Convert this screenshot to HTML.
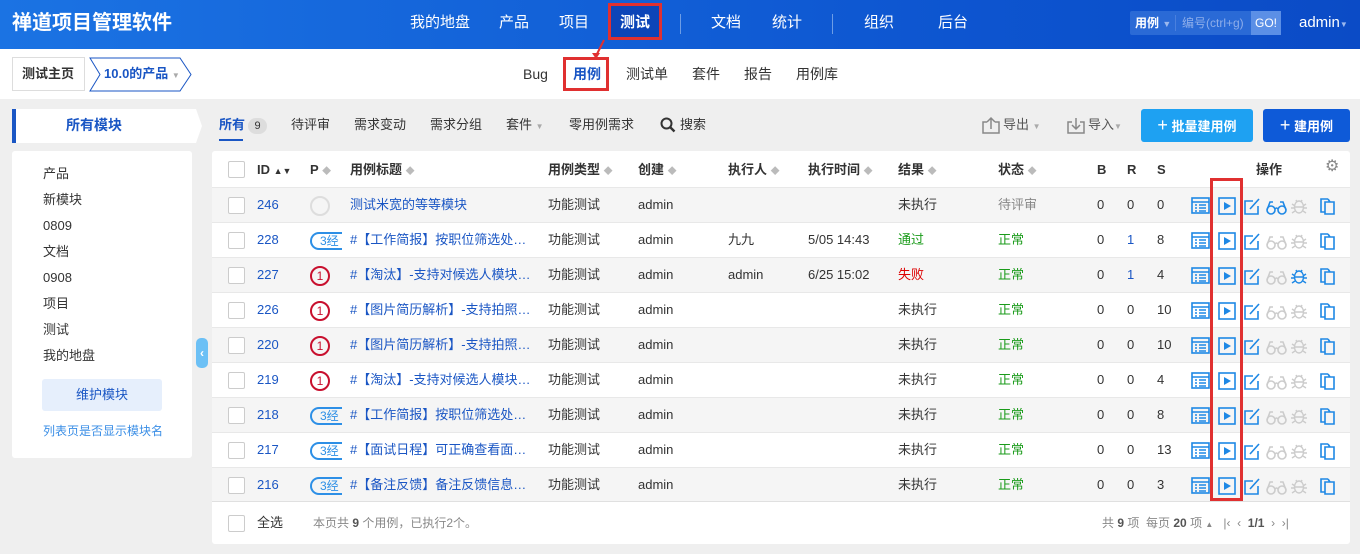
<!DOCTYPE html>
<html><head><meta charset="utf-8"><style>
*{box-sizing:border-box;margin:0;padding:0}
body{width:1360px;height:554px;overflow:hidden;background:#efefef;font-family:"Liberation Sans","Noto Sans CJK SC",sans-serif;font-size:13px;line-height:16px;color:#333;position:relative}
.a{position:absolute;white-space:nowrap}
#hd{position:absolute;left:0;top:0;width:1360px;height:49px;background:linear-gradient(90deg,#1b73e3,#0d55d0 70%,#0b4bc6)}
.w{color:#fff;font-size:15px;line-height:18px;top:14px}
#sub{position:absolute;left:0;top:49px;width:1360px;height:50px;background:#fff}
.s{top:66px;font-size:14px;line-height:17px;color:#333}
.tb{top:117px;font-size:13px;color:#333}
.lp{left:43px;font-size:13px;color:#333}
#tbl{position:absolute;left:212px;top:151px;width:1138px;height:393px;background:#fff;border-radius:3px}
.row{position:absolute;left:212px;width:1138px;height:35px;border-top:1px solid #e8e8e8}
.g{background:#f5f5f5}
.row span{position:absolute;top:9px;white-space:nowrap}
.cb{position:absolute;left:16px;top:9px;width:17px;height:17px;border:1px solid #ccc;border-radius:2px;background:#fff}
.id{left:45px;color:#1a56c4}
.t{left:138px;color:#1a56c4}
.c1{left:336px}.c2{left:426px}.c3{left:516px}.c4{left:596px}.c5{left:686px}.c6{left:786px}
.b{left:885px}.r{left:915px}.sn{left:945px}
.ic{position:absolute;top:8px}
.p1{position:absolute;left:98px;top:8px;width:20px;height:20px;border:2px solid #c8102e;border-radius:50%;color:#c8102e;font-size:12px;text-align:center;line-height:16px}
.p3{position:absolute;left:98px;top:9px;width:32px;height:18px;border:2px solid #2d8fe6;border-right:none;border-radius:9px 0 0 9px;color:#2d8fe6;font-size:12px;line-height:14px;padding-left:8px;overflow:hidden}
.h{position:absolute;top:162px;font-weight:bold;font-size:13px;white-space:nowrap}
</style></head><body>
<div id="hd"></div>
<div class="a" style="left:12px;top:11px;color:#fff;font-size:20px;line-height:24px;font-weight:bold">禅道项目管理软件</div>
<div class="a w" style="left:410px">我的地盘</div>
<div class="a w" style="left:499px">产品</div>
<div class="a w" style="left:559px">项目</div>
<div class="a" style="left:608px;top:3px;width:54px;height:37px;border:3px solid #e03030;background:#0c45b8"></div>
<div class="a w" style="left:620px;font-weight:bold">测试</div>
<div class="a" style="left:680px;top:14px;width:1px;height:20px;background:#6d9de6"></div>
<div class="a w" style="left:711px">文档</div>
<div class="a w" style="left:772px">统计</div>
<div class="a" style="left:832px;top:14px;width:1px;height:20px;background:#6d9de6"></div>
<div class="a w" style="left:864px">组织</div>
<div class="a w" style="left:938px">后台</div>
<div class="a" style="left:1130px;top:11px;width:151px;height:24px;background:#2a6ad6;border-radius:2px"></div>
<div class="a" style="left:1135px;top:15px;color:#fff;font-size:12px;font-weight:bold">用例 <span style="color:#9bb8ee;font-size:9px">▼</span></div>
<div class="a" style="left:1175px;top:15px;width:1px;height:16px;background:#4a80de"></div>
<div class="a" style="left:1182px;top:15px;color:#8eaeea;font-size:12px">编号(ctrl+g)</div>
<div class="a" style="left:1251px;top:11px;width:30px;height:24px;background:#5b8fe6;color:#fff;font-size:12px;line-height:24px;text-align:center">GO!</div>
<div class="a" style="left:1299px;top:14px;color:#fff;font-size:15px;line-height:18px">admin<span style="font-size:8px;color:#9bb8ee">▼</span></div>
<div id="sub"></div>
<div class="a" style="left:12px;top:57px;width:73px;height:34px;border:1px solid #ddd;font-weight:bold;line-height:32px;padding-left:9px;font-size:13px">测试主页</div>
<svg class="a" style="left:88px;top:57px" width="106" height="35"><path d="M2 1H92L103 17.5L92 34H2L12 17.5Z" fill="#fff" stroke="#1a56c4"/></svg>
<div class="a" style="left:104px;top:66px;color:#1a56c4;font-weight:bold;font-size:13px">10.0的产品 <span style="color:#aaa;font-size:8px">▼</span></div>
<div class="a s" style="left:523px">Bug</div>
<div class="a" style="left:563px;top:57px;width:46px;height:34px;border:3px solid #e03030"></div>
<div class="a s" style="left:573px;color:#1a56c4;font-weight:bold">用例</div>
<svg class="a" style="left:590px;top:38px" width="20" height="24"><path d="M14 2L6 18" stroke="#e03030" stroke-width="2"/><path d="M2 15L6 21L10 15Z" fill="#e03030"/></svg>
<div class="a s" style="left:626px">测试单</div>
<div class="a s" style="left:692px">套件</div>
<div class="a s" style="left:744px">报告</div>
<div class="a s" style="left:796px">用例库</div>
<svg class="a" style="left:12px;top:109px" width="190" height="34"><path d="M0 0H184L190 17L184 34H0Z" fill="#fff"/><rect width="4" height="34" fill="#1a56c4"/></svg>
<div class="a" style="left:66px;top:117px;color:#1a56c4;font-weight:bold;font-size:14px;line-height:17px">所有模块</div>
<div class="a tb" style="left:219px;color:#1a56c4;font-weight:bold">所有</div>
<div class="a" style="left:219px;top:139px;width:24px;height:2px;background:#1a56c4"></div>
<div class="a" style="left:248px;top:118px;width:19px;height:16px;border-radius:8px;background:#ddd;font-size:11px;text-align:center;line-height:16px">9</div>
<div class="a tb" style="left:291px">待评审</div>
<div class="a tb" style="left:354px">需求变动</div>
<div class="a tb" style="left:430px">需求分组</div>
<div class="a tb" style="left:506px">套件 <span style="color:#aaa;font-size:8px">▼</span></div>
<div class="a tb" style="left:569px">零用例需求</div>
<svg class="a" style="left:660px;top:117px" width="16" height="16"><circle cx="6.5" cy="6.5" r="5" fill="none" stroke="#333" stroke-width="2"/><path d="M10 10L14.5 14.5" stroke="#333" stroke-width="2.4"/></svg>
<div class="a tb" style="left:680px">搜索</div>
<svg class="a" style="left:981px;top:116px" width="20" height="18"><path d="M6 6H2V17H18V6H14M10 13V2M6 6L10 2L14 6" fill="none" stroke="#888" stroke-width="1.5"/></svg>
<div class="a tb" style="left:1003px;color:#555">导出 <span style="color:#aaa;font-size:8px">▼</span></div>
<svg class="a" style="left:1066px;top:116px" width="20" height="18"><path d="M6 6H2V17H18V6H14M10 2V13M6 9L10 13L14 9" fill="none" stroke="#888" stroke-width="1.5"/></svg>
<div class="a tb" style="left:1088px;color:#555">导入<span style="color:#aaa;font-size:8px">▼</span></div>
<div class="a" style="left:1141px;top:109px;width:112px;height:33px;background:#1ea1f2;border-radius:3px;color:#fff;font-weight:bold;line-height:33px;text-align:center;font-size:13px"><span style="font-size:18px;font-weight:normal">+</span> 批量建用例</div>
<div class="a" style="left:1263px;top:109px;width:87px;height:33px;background:#0e5ad8;border-radius:3px;color:#fff;font-weight:bold;line-height:33px;text-align:center;font-size:13px"><span style="font-size:18px;font-weight:normal">+</span> 建用例</div>
<div class="a" style="left:12px;top:151px;width:180px;height:307px;background:#fff;border-radius:3px"></div>
<div class="a lp" style="top:166px">产品</div>
<div class="a lp" style="top:192px">新模块</div>
<div class="a lp" style="top:218px">0809</div>
<div class="a lp" style="top:244px">文档</div>
<div class="a lp" style="top:270px">0908</div>
<div class="a lp" style="top:296px">项目</div>
<div class="a lp" style="top:322px">测试</div>
<div class="a lp" style="top:348px">我的地盘</div>
<div class="a" style="left:42px;top:379px;width:120px;height:32px;background:#e6effc;border-radius:3px;color:#1a56c4;text-align:center;line-height:32px">维护模块</div>
<div class="a" style="left:43px;top:423px;color:#3a8ee6;font-size:12px">列表页是否显示模块名</div>
<div class="a" style="left:196px;top:338px;width:12px;height:30px;background:#6cc0f5;border-radius:5px;color:#fff;font-size:12px;text-align:center;line-height:30px;font-weight:bold">‹</div>
<div id="tbl"></div>
<div class="a" style="left:228px;top:161px;width:17px;height:17px;border:1px solid #ccc;border-radius:2px"></div>
<div class="h" style="left:257px">ID <span style="font-size:9px">▲▼</span></div>
<div class="h" style="left:310px">P <span style="font-size:9px;color:#bbb">◆</span></div>
<div class="h" style="left:350px">用例标题 <span style="font-size:9px;color:#bbb">◆</span></div>
<div class="h" style="left:548px">用例类型 <span style="font-size:9px;color:#bbb">◆</span></div>
<div class="h" style="left:638px">创建 <span style="font-size:9px;color:#bbb">◆</span></div>
<div class="h" style="left:728px">执行人 <span style="font-size:9px;color:#bbb">◆</span></div>
<div class="h" style="left:808px">执行时间 <span style="font-size:9px;color:#bbb">◆</span></div>
<div class="h" style="left:898px">结果 <span style="font-size:9px;color:#bbb">◆</span></div>
<div class="h" style="left:998px">状态 <span style="font-size:9px;color:#bbb">◆</span></div>
<div class="h" style="left:1097px">B</div>
<div class="h" style="left:1127px">R</div>
<div class="h" style="left:1157px">S</div>
<div class="h" style="left:1256px">操作</div>
<div class="a" style="left:1325px;top:159px;color:#888;font-size:16px">⚙</div>

<svg width="0" height="0" style="position:absolute"><defs>
<g id="ops">
<g fill="none" stroke="#1e88e5" stroke-width="1.6"><rect x="1" y="2" width="17" height="15"/><path d="M1 6H18M4 9H6M8 9H15M4 12H6M8 12H15M4 15H6M8 15H15"/></g>
<rect x="28" y="2" width="16" height="16" fill="none" stroke="#1e88e5" stroke-width="1.6"/><path d="M33 6L40 10L33 14Z" fill="#1e88e5"/>
<g fill="none" stroke="#1e88e5" stroke-width="1.6"><path d="M62 5H54V18H67V10"/><path d="M59 13L68 3"/></g>
</g>
<g id="gl"><g fill="none" stroke-width="1.6"><circle cx="80" cy="14" r="4"/><circle cx="91" cy="14" r="4"/><path d="M76 14L79 6H82M95 14L92 6H89M84 13Q85.5 11 87 13"/></g></g>
<g id="bg"><g fill="none" stroke-width="1.4"><ellipse cx="108" cy="11" rx="4.5" ry="6"/><path d="M101 8L104 10M115 8L112 10M100 12H103M116 12H113M101 17L104 15M115 17L112 15M105 4L106 6M111 4L110 6M103.5 11H112.5"/></g></g>
<g id="cp"><g fill="none" stroke="#1e88e5" stroke-width="1.6"><path d="M137 3H130V16H134M134 6H143V18H134Z M137 3L139 6"/></g></g>
</defs></svg>

<div class="row g" style="top:187px"><div class="cb"></div><span class="id">246</span><div class="p1" style="border-color:#ddd"></div><span class="t">测试米宽的等等模块</span><span class="c1">功能测试</span><span class="c2">admin</span><span class="c5">未执行</span><span class="c6" style="color:#888">待评审</span><span class="b">0</span><span class="r">0</span><span class="sn">0</span><svg class="ic" style="left:979px" width="150" height="20"><use href="#ops"/><use href="#gl" stroke="#1e88e5"/><use href="#bg" stroke="#ccc"/><use href="#cp"/></svg></div>
<div class="row" style="top:222px"><div class="cb"></div><span class="id">228</span><div class="p3">3经</div><span class="t">#【工作简报】按职位筛选处…</span><span class="c1">功能测试</span><span class="c2">admin</span><span class="c3">九九</span><span class="c4">5/05 14:43</span><span class="c5" style="color:#1a9b1a">通过</span><span class="c6" style="color:#1a9b1a">正常</span><span class="b">0</span><span class="r" style="color:#1a56c4">1</span><span class="sn">8</span><svg class="ic" style="left:979px" width="150" height="20"><use href="#ops"/><use href="#gl" stroke="#ccc"/><use href="#bg" stroke="#ccc"/><use href="#cp"/></svg></div>
<div class="row g" style="top:257px"><div class="cb"></div><span class="id">227</span><div class="p1">1</div><span class="t">#【淘汰】-支持对候选人模块…</span><span class="c1">功能测试</span><span class="c2">admin</span><span class="c3">admin</span><span class="c4">6/25 15:02</span><span class="c5" style="color:#d00">失败</span><span class="c6" style="color:#1a9b1a">正常</span><span class="b">0</span><span class="r" style="color:#1a56c4">1</span><span class="sn">4</span><svg class="ic" style="left:979px" width="150" height="20"><use href="#ops"/><use href="#gl" stroke="#ccc"/><use href="#bg" stroke="#1e88e5"/><use href="#cp"/></svg></div>
<div class="row" style="top:292px"><div class="cb"></div><span class="id">226</span><div class="p1">1</div><span class="t">#【图片简历解析】-支持拍照…</span><span class="c1">功能测试</span><span class="c2">admin</span><span class="c5">未执行</span><span class="c6" style="color:#1a9b1a">正常</span><span class="b">0</span><span class="r">0</span><span class="sn">10</span><svg class="ic" style="left:979px" width="150" height="20"><use href="#ops"/><use href="#gl" stroke="#ccc"/><use href="#bg" stroke="#ccc"/><use href="#cp"/></svg></div>
<div class="row g" style="top:327px"><div class="cb"></div><span class="id">220</span><div class="p1">1</div><span class="t">#【图片简历解析】-支持拍照…</span><span class="c1">功能测试</span><span class="c2">admin</span><span class="c5">未执行</span><span class="c6" style="color:#1a9b1a">正常</span><span class="b">0</span><span class="r">0</span><span class="sn">10</span><svg class="ic" style="left:979px" width="150" height="20"><use href="#ops"/><use href="#gl" stroke="#ccc"/><use href="#bg" stroke="#ccc"/><use href="#cp"/></svg></div>
<div class="row" style="top:362px"><div class="cb"></div><span class="id">219</span><div class="p1">1</div><span class="t">#【淘汰】-支持对候选人模块…</span><span class="c1">功能测试</span><span class="c2">admin</span><span class="c5">未执行</span><span class="c6" style="color:#1a9b1a">正常</span><span class="b">0</span><span class="r">0</span><span class="sn">4</span><svg class="ic" style="left:979px" width="150" height="20"><use href="#ops"/><use href="#gl" stroke="#ccc"/><use href="#bg" stroke="#ccc"/><use href="#cp"/></svg></div>
<div class="row g" style="top:397px"><div class="cb"></div><span class="id">218</span><div class="p3">3经</div><span class="t">#【工作简报】按职位筛选处…</span><span class="c1">功能测试</span><span class="c2">admin</span><span class="c5">未执行</span><span class="c6" style="color:#1a9b1a">正常</span><span class="b">0</span><span class="r">0</span><span class="sn">8</span><svg class="ic" style="left:979px" width="150" height="20"><use href="#ops"/><use href="#gl" stroke="#ccc"/><use href="#bg" stroke="#ccc"/><use href="#cp"/></svg></div>
<div class="row" style="top:432px"><div class="cb"></div><span class="id">217</span><div class="p3">3经</div><span class="t">#【面试日程】可正确查看面…</span><span class="c1">功能测试</span><span class="c2">admin</span><span class="c5">未执行</span><span class="c6" style="color:#1a9b1a">正常</span><span class="b">0</span><span class="r">0</span><span class="sn">13</span><svg class="ic" style="left:979px" width="150" height="20"><use href="#ops"/><use href="#gl" stroke="#ccc"/><use href="#bg" stroke="#ccc"/><use href="#cp"/></svg></div>
<div class="row g" style="top:467px;border-bottom:1px solid #e0e0e0"><div class="cb"></div><span class="id">216</span><div class="p3">3经</div><span class="t">#【备注反馈】备注反馈信息…</span><span class="c1">功能测试</span><span class="c2">admin</span><span class="c5">未执行</span><span class="c6" style="color:#1a9b1a">正常</span><span class="b">0</span><span class="r">0</span><span class="sn">3</span><svg class="ic" style="left:979px" width="150" height="20"><use href="#ops"/><use href="#gl" stroke="#ccc"/><use href="#bg" stroke="#ccc"/><use href="#cp"/></svg></div>

<div class="a" style="left:1210px;top:178px;width:33px;height:323px;border:3px solid #e03030"></div>
<div class="a" style="left:228px;top:515px;width:17px;height:17px;border:1px solid #ccc;border-radius:2px"></div>
<div class="a" style="left:257px;top:515px">全选</div>
<div class="a" style="left:313px;top:515px;color:#888;font-size:12px">本页共 <b style="color:#555">9</b> 个用例，已执行2个。</div>
<div class="a" style="left:1102px;top:515px;color:#888;font-size:12px">共 <b style="color:#555">9</b> 项 &nbsp;每页 <b style="color:#555">20</b> 项 <span style="font-size:8px">▲</span> &nbsp; |‹ &nbsp;‹ &nbsp;<b style="color:#555">1/1</b> &nbsp;› &nbsp;›|</div>
</body></html>
